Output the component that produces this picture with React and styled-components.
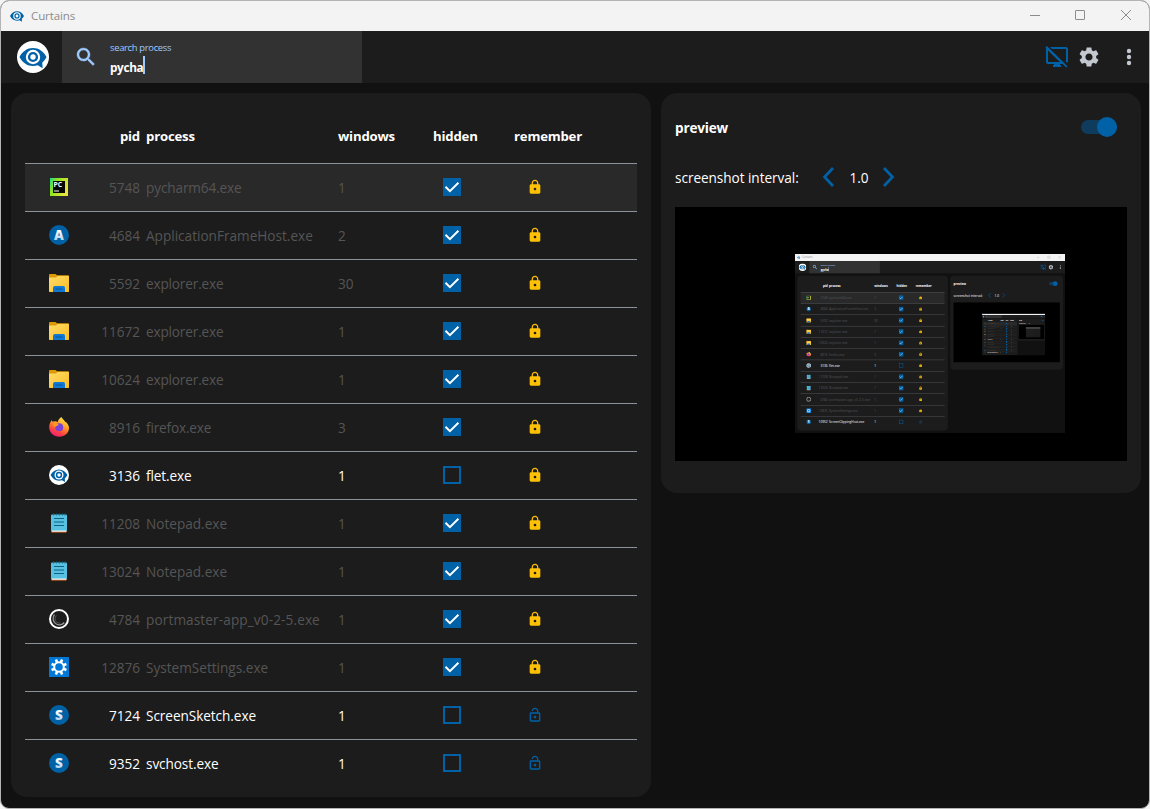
import React from "react";
import styled, { createGlobalStyle, css } from "styled-components";

const Global = createGlobalStyle`
  *, *::before, *::after { box-sizing: border-box; }
  body { margin: 0; background: #f4f4f4; overflow: hidden; }
`;

const BLUE = "#0061a6";
const font = '"Open Sans", "Noto Sans", sans-serif';

const WindowFrame = styled.div`
  display: flex;
  flex-direction: column;
  width: ${(p) => (p.$nested ? 1148 : 1150)}px;
  height: ${(p) => (p.$nested ? 761 : 809)}px;
  overflow: hidden;
  background: #111;
  color: #fff;
  font-family: ${font};
  font-size: 13.6px;
  ${(p) =>
    !p.$nested &&
    css`
      border: 1px solid #b4b4b4;
      border-radius: 9px;
    `}
`;

const TitleBar = styled.header`
  display: flex;
  align-items: center;
  flex: none;
  height: 30px;
  padding-left: 9px;
  background: #f3f3f3;
  color: #8c8c8c;
`;

const TitleText = styled.span`
  flex: 1;
  margin-left: 7px;
  font-size: 11.6px;
  line-height: 16px;
  letter-spacing: -0.15px;
`;

const WindowControls = styled.div`
  display: flex;
  svg { display: block; width: 46px; height: 30px; }
`;

const AppBar = styled.div`
  display: flex;
  align-items: center;
  flex: none;
  height: 52px;
  background: #1c1c1c;
`;

const Brand = styled.div`
  display: flex;
  width: 61px;
  padding-left: 16px;
`;

const SearchField = styled.div`
  display: flex;
  align-items: center;
  width: 300px;
  height: 52px;
  padding-left: 12px;
  background: #323232;
`;

const SearchLabels = styled.div`
  display: flex;
  flex-direction: column;
  gap: 2px;
  margin-left: 12px;
  padding-top: 4px;
`;

const SearchLabel = styled.span`
  height: 14px;
  font-size: 9.4px;
  line-height: 14px;
  font-weight: 500;
  letter-spacing: -0.3px;
  color: #9ecaff;
`;

const SearchValue = styled.span`
  display: flex;
  align-items: center;
  height: 20px;
  font-size: 11.8px;
  line-height: 20px;
  font-weight: 700;
  letter-spacing: -0.35px;
`;

const Caret = styled.i`
  width: 2px;
  height: 18px;
  margin-top: -4px;
  background: #9ecaff;
`;

const Actions = styled.div`
  display: flex;
  align-items: center;
  margin-left: auto;
  padding-right: 8px;
  svg { display: block; }
`;

const MoreButton = styled.div`
  display: flex;
  margin-left: 16px;
`;

const Body = styled.main`
  display: flex;
  align-items: flex-start;
  flex: 1;
  min-height: 0;
  gap: 10px;
  padding: 10px 8px 11px 10px;
`;

const Panel = styled.section`
  background: #1c1c1c;
  border-radius: 16px;
  padding: 14px;
  overflow: hidden;
`;

const TablePanel = styled(Panel)`
  width: 640px;
  height: 100%;
`;

const PreviewPanel = styled(Panel)`
  width: 480px;
  height: 400px;
`;

const columns = css`
  display: grid;
  grid-template-columns: 20px 72px 197px 95px 81px 1fr;
  align-items: center;
  width: 612px;
  padding-left: 24px;
`;

const HeadRow = styled.div`
  ${columns}
  height: 56px;
  font-weight: 700;
  font-size: 13.2px;
  letter-spacing: -0.2px;
`;

const Row = styled.div`
  ${columns}
  height: 48px;
  padding-bottom: 2px;
  border-top: 1px solid #8d9199;
  background: ${(p) => (p.$active ? "#292929" : "transparent")};
  color: ${(p) => (p.$dim ? "#555" : "#fff")};
`;

const Cell = styled.span`
  display: flex;
  white-space: nowrap;
  line-height: 20px;
  padding-top: 2px;
`;

const IconCell = styled(Cell)`
  padding-top: 0;
  svg { display: block; }
`;

const PidCell = styled(Cell)`
  justify-content: flex-end;
  padding-right: 1px;
`;

const NameCell = styled(Cell)`
  padding-left: 5px;
  letter-spacing: ${(p) => p.$ls || 0}px;
`;

const CheckCell = styled(IconCell)`
  padding-left: 10px;
`;

const LockCell = styled(IconCell)`
  padding-left: 12.500px;
`;

const CheckBox = styled.span`
  width: 18px;
  height: 18px;
  border: 2px solid ${BLUE};
  background: ${(p) => (p.$on ? BLUE : "transparent")};
  svg { display: block; margin: -2px; }
`;

const PreviewHead = styled.div`
  display: flex;
  align-items: center;
  justify-content: space-between;
  height: 40px;
  padding-right: 10px;
  font-weight: 700;
  letter-spacing: -0.2px;
`;

const SwitchTrack = styled.div`
  width: 36px;
  height: 14px;
  border-radius: 7px;
  background: #0f3c5d;
`;

const SwitchThumb = styled.div`
  width: 20px;
  height: 20px;
  margin: -3px 0 0 16px;
  border-radius: 50%;
  background: ${BLUE};
`;

const IntervalRow = styled.div`
  display: flex;
  align-items: center;
  height: 60px;
  line-height: 20px;
  svg { display: block; margin-top: -1px; }
`;

const IntervalLabel = styled.span`
  width: 135px;
  padding-top: 2px;
  white-space: nowrap;
  letter-spacing: -0.05px;
`;

const IntervalValue = styled.span`
  width: 22px;
  margin: 0 12px 0 9px;
  padding-top: 2px;
  text-align: center;
`;

const Stage = styled.div`
  display: flex;
  width: 452px;
  height: 254px;
  padding: 47px 0 0 120px;
  background: #000;
`;

const Thumb = styled.div`
  width: 270px;
  height: 179px;
  overflow: hidden;
`;

const Shrink = styled.div`
  width: 1148px;
  height: 761px;
  transform: scale(0.2352);
  transform-origin: 0 0;
`;

const MiniWindow = styled.div`
  display: flex;
  flex-direction: column;
  width: 270px;
  height: 179px;
  background: #1c1c1c;
  border-top: 12px solid #f3f3f3;
`;

const MiniRow = styled.div`
  flex: 1;
  margin: 0 130px 0 10px;
  border-bottom: 3px solid #444;
`;

function EyeLogo({ size, bare }) {
  return (
    <svg width={size} height={size} viewBox="0 0 32 32">
      {!bare && <circle cx="16" cy="16" r="16" fill="#fff" />}
      <g transform={bare ? "translate(-2.9 -2.9) scale(1.18)" : undefined}>
        <path
          d="M2.500 16C5.300 10.400 10.300 7 16 7S26.700 10.400 29.500 16c-1 2.100-2.400 4-4.200 5.500l.3 5.800-4.800-3c-1.500.5-3.100.7-4.800.7C10.300 25 5.300 21.600 2.500 16z"
          fill={BLUE}
        />
        <circle cx="16" cy="16" r="7.200" fill="#fff" />
        <circle cx="16" cy="16" r="5.100" fill={BLUE} />
        <circle cx="16" cy="16" r="2.700" fill="#fff" />
      </g>
    </svg>
  );
}

function PyCharmIcon() {
  return (
    <svg width="20" height="20" viewBox="0 0 20 20">
      <defs>
        <linearGradient id="pc" x1="0" y1="0" x2="1" y2=".5">
          <stop offset="0" stopColor="#21d789" />
          <stop offset=".35" stopColor="#8be621" />
          <stop offset="1" stopColor="#e8e337" />
        </linearGradient>
      </defs>
      <path d="M1 1h18v18H1z" fill="url(#pc)" />
      <path d="M4 4h12v12H4z" fill="#050805" />
      <text x="4.600" y="9.900" fontSize="6.800" fontWeight="700" fill="#fff" fontFamily="Open Sans, sans-serif">PC</text>
      <path d="M5 13.500h5v1H5z" fill="#fff" />
    </svg>
  );
}

function LetterIcon({ letter }) {
  return (
    <svg width="20" height="20" viewBox="0 0 20 20">
      <defs>
        <linearGradient id="letter" x1="0" y1="0" x2="0" y2="1">
          <stop offset=".3" stopColor="#fff" />
          <stop offset="1" stopColor="#8fbbe0" />
        </linearGradient>
      </defs>
      <circle cx="10" cy="10" r="10" fill={BLUE} />
      <text x="10" y="15" fontSize="13.500" fontWeight="800" fill="url(#letter)" textAnchor="middle" fontFamily="Open Sans, sans-serif">{letter}</text>
    </svg>
  );
}

function FolderIcon() {
  return (
    <svg width="20" height="20" viewBox="0 0 20 20">
      <defs>
        <linearGradient id="folder" x1="0" y1="0" x2="1" y2="1">
          <stop offset="0" stopColor="#ffdc6b" />
          <stop offset="1" stopColor="#fdbd20" />
        </linearGradient>
      </defs>
      <path d="M0 2q0-1 1-1h5.500l1.500 1.300h11q1 0 1 1V8H0z" fill="#dd9a06" />
      <path d="M0 5q0-.6.8-.6H7L8.600 3H19.400q.6 0 .6.800V18.300q0 .7-.7.700H.7Q0 19 0 18.300z" fill="url(#folder)" />
      <path d="M4 19v-4q0-2 2-2h8q2 0 2 2v4z" fill="#0f78d0" />
      <path d="M6.500 15.500h7v1h-7z" fill="#0a549e" />
    </svg>
  );
}

function FirefoxIcon() {
  return (
    <svg width="20" height="20" viewBox="0 0 20 20">
      <defs>
        <linearGradient id="fox" x1=".8" y1="0" x2=".3" y2="1">
          <stop offset="0" stopColor="#fff04a" />
          <stop offset=".4" stopColor="#ffa129" />
          <stop offset=".7" stopColor="#ff5038" />
          <stop offset="1" stopColor="#f5167e" />
        </linearGradient>
      </defs>
      <path d="M12.500 0c.6 1.800 3 3 3.800 5 1 .2 1.600 1 1.900 1.400C19.500 8 20 9.500 20 11c0 5-4.400 8.700-9.800 8.700S.2 15.600.2 10.200C.2 7 1.500 4.500 3 3c0 1 .2 1.400.6 1.800C4.500 4.300 5 4 5.200 4.600c1.300-.5 2.500-.2 3.500.7C9 3 10.500 1 12.500 0z" fill="url(#fox)" />
      <circle cx="10.200" cy="10.300" r="4" fill="#7a42d8" />
      <path d="M4 7c2-1.200 4.200-.8 5.700.7-1 1.500-3 .8-3.500 2.500C5 10 4 8.500 4 7z" fill="#ff9a20" />
    </svg>
  );
}

function NotepadIcon() {
  return (
    <svg width="20" height="20" viewBox="0 0 20 20">
      <path d="M2.500 17h15v2.800h-15z" fill="#a6541c" />
      <path d="M2.500 16h15v2.800h-15z" fill="#f2f2f2" />
      <path d="M2 2.500q0-1 1-1h14q1 0 1 1V17.600H2z" fill="#58c1e2" />
      <path d="M4.500.5v2M7.500.5v2M10.500.5v2M13.500.5v2M16 .5v2" stroke="#117393" />
      <path d="M5 5.500h10M5 9h10M5 12.500h10" stroke="#0d6280" />
    </svg>
  );
}

function PortmasterIcon() {
  return (
    <svg width="20" height="20" viewBox="0 0 20 20" fill="none">
      <circle cx="10" cy="10" r="9" stroke="#fff" strokeWidth="2" />
      <path d="M5.500 5.500a6.300 6.300 0 0 0 9.800 8" stroke="#999" strokeWidth="1.200" />
      <path d="M7.300 6.500a4.400 4.400 0 0 0 4 7.500" stroke="#555" />
    </svg>
  );
}

const gearPath =
  "M19.140 12.940c.04-.3.06-.61.06-.94 0-.32-.02-.64-.07-.94l2.030-1.580c.18-.14.23-.41.12-.61l-1.920-3.320c-.12-.22-.37-.29-.59-.22l-2.390.96c-.5-.38-1.030-.7-1.620-.94l-.36-2.540c-.04-.24-.24-.41-.48-.41h-3.840c-.24 0-.43.17-.47.41l-.36 2.540c-.59.24-1.130.57-1.620.94l-2.390-.96c-.22-.08-.47 0-.59.22L2.740 8.870c-.12.21-.08.47.12.61l2.030 1.580c-.05.3-.09.63-.09.94s.02.64.07.94l-2.030 1.580c-.18.14-.23.41-.12.61l1.920 3.320c.12.22.37.29.59.22l2.390-.96c.5.38 1.030.7 1.620.94l.36 2.540c.05.24.24.41.48.41h3.840c.24 0 .44-.17.47-.41l.36-2.540c.59-.24 1.130-.56 1.620-.94l2.390.96c.22.08.47 0 .59-.22l1.920-3.320c.12-.22.07-.47-.12-.61l-2.010-1.580zM12 15.600c-1.980 0-3.600-1.620-3.600-3.600s1.620-3.600 3.600-3.600 3.600 1.620 3.600 3.600-1.620 3.600-3.600 3.600z";

function SettingsTile() {
  return (
    <svg width="20" height="20" viewBox="0 0 20 20">
      <path d="M0 0h20v20H0z" fill="#0078d7" />
      <g fill="none" stroke="#fff">
        <circle cx="10" cy="10" r="4.800" strokeWidth="2" />
        {[22.5, 67.5, 112.5, 157.5, 202.5, 247.5, 292.5, 337.5].map((a) => (
          <path key={a} d="M10 2v3" strokeWidth="2.600" transform={`rotate(${a} 10 10)`} />
        ))}
      </g>
    </svg>
  );
}

function LockIcon({ open }) {
  return (
    <svg width="16" height="16" viewBox="0 0 24 24" fill={open ? BLUE : "#ffc107"}>
      {open ? (
        <path d="M12 17c1.100 0 2-.9 2-2s-.9-2-2-2-2 .9-2 2 .9 2 2 2zm6-9h-1V6c0-2.760-2.240-5-5-5S7 3.240 7 6h1.900c0-1.710 1.390-3.100 3.100-3.100s3.100 1.390 3.100 3.100v2H6c-1.100 0-2 .9-2 2v10c0 1.100.9 2 2 2h12c1.100 0 2-.9 2-2V10c0-1.100-.9-2-2-2zm0 12H6V10h12v10z" />
      ) : (
        <path d="M18 8h-1V6c0-2.760-2.240-5-5-5S7 3.240 7 6v2H6c-1.100 0-2 .9-2 2v10c0 1.100.9 2 2 2h12c1.100 0 2-.9 2-2V10c0-1.100-.9-2-2-2zm-6 9c-1.100 0-2-.9-2-2s.9-2 2-2 2 .9 2 2-.9 2-2 2zm3.100-9H8.900V6c0-1.710 1.390-3.100 3.100-3.100s3.100 1.390 3.100 3.100v2z" />
      )}
    </svg>
  );
}

const icons = {
  pycharm: <PyCharmIcon />,
  a: <LetterIcon letter="A" />,
  s: <LetterIcon letter="S" />,
  folder: <FolderIcon />,
  firefox: <FirefoxIcon />,
  eye: <EyeLogo size={20} />,
  notepad: <NotepadIcon />,
  portmaster: <PortmasterIcon />,
  settings: <SettingsTile />,
};

const processes = [
  { icon: "pycharm", pid: 5748, name: "pycharm64.exe", windows: 1, hidden: true, locked: true, ls: -0.12 },
  { icon: "a", pid: 4684, name: "ApplicationFrameHost.exe", windows: 2, hidden: true, locked: true },
  { icon: "folder", pid: 5592, name: "explorer.exe", windows: 30, hidden: true, locked: true, ls: -0.16 },
  { icon: "folder", pid: 11672, name: "explorer.exe", windows: 1, hidden: true, locked: true, ls: -0.16 },
  { icon: "folder", pid: 10624, name: "explorer.exe", windows: 1, hidden: true, locked: true, ls: -0.16 },
  { icon: "firefox", pid: 8916, name: "firefox.exe", windows: 3, hidden: true, locked: true, ls: -0.16 },
  { icon: "eye", pid: 3136, name: "flet.exe", windows: 1, hidden: false, locked: true, ls: -0.1 },
  { icon: "notepad", pid: 11208, name: "Notepad.exe", windows: 1, hidden: true, locked: true },
  { icon: "notepad", pid: 13024, name: "Notepad.exe", windows: 1, hidden: true, locked: true },
  { icon: "portmaster", pid: 4784, name: "portmaster-app_v0-2-5.exe", windows: 1, hidden: true, locked: true, ls: 0.12 },
  { icon: "settings", pid: 12876, name: "SystemSettings.exe", windows: 1, hidden: true, locked: true },
  { icon: "s", pid: 7124, name: "ScreenSketch.exe", windows: 1, hidden: false, locked: false, ls: -0.06 },
  { icon: "s", pid: 9352, name: "svchost.exe", windows: 1, hidden: false, locked: false, ls: -0.1 },
];

const capturedProcesses = [
  ...processes.slice(0, 11),
  { icon: "s", pid: 10952, name: "ScreenClippingHost.exe", windows: 1, hidden: false, locked: false },
];

function ProcessRow({ item, active }) {
  return (
    <Row $active={active} $dim={item.hidden}>
      <IconCell>{icons[item.icon]}</IconCell>
      <PidCell>{item.pid}</PidCell>
      <NameCell $ls={item.ls}>{item.name}</NameCell>
      <Cell>{item.windows}</Cell>
      <CheckCell>
        <CheckBox $on={item.hidden}>
          {item.hidden && (
            <svg width="18" height="18" viewBox="0 0 18 18" fill="none" stroke="#fff" strokeWidth="2">
              <path d="M2.500 8.800l4.400 4.400 8.500-8.500" />
            </svg>
          )}
        </CheckBox>
      </CheckCell>
      <LockCell><LockIcon open={!item.locked} /></LockCell>
    </Row>
  );
}

function CurtainsWindow({ depth = 0 }) {
  const nested = depth > 0;
  const rows = nested ? capturedProcesses : processes;
  return (
    <WindowFrame $nested={nested}>
      <TitleBar>
        <EyeLogo size={14} bare />
        <TitleText>Curtains</TitleText>
        <WindowControls>
          <svg viewBox="0 0 46 30" stroke="#8c8c8c"><path d="M19 14.500h10" /></svg>
          <svg viewBox="0 0 46 30" stroke="#8c8c8c" fill="none"><rect x="18.500" y="9.500" width="9" height="9" rx=".5" /></svg>
          <svg viewBox="0 0 46 30" stroke="#8c8c8c"><path d="M18 9l10 10M28 9L18 19" /></svg>
        </WindowControls>
      </TitleBar>
      <AppBar>
        <Brand><EyeLogo size={32} /></Brand>
        <SearchField>
          <svg width="24" height="24" viewBox="0 0 24 24" fill="#9ecaff" stroke="#9ecaff" strokeWidth=".4">
            <path d="M15.500 14h-.79l-.28-.27C15.410 12.590 16 11.110 16 9.500 16 5.910 13.090 3 9.500 3S3 5.910 3 9.500 5.910 16 9.500 16c1.610 0 3.090-.59 4.230-1.570l.27.28v.79l5 4.990L20.490 19l-4.990-5zm-6 0C7.010 14 5 11.990 5 9.500S7.010 5 9.500 5 14 7.010 14 9.500 11.990 14 9.500 14z" />
          </svg>
          <SearchLabels>
            <SearchLabel>search process</SearchLabel>
            <SearchValue>pycha<Caret /></SearchValue>
          </SearchLabels>
        </SearchField>
        <Actions>
          <svg width="40" height="24" viewBox="-8 -1 40 24" fill={BLUE}>
            <path d="M0.600 1.300L1.900 0 22.500 20.200 21.200 21.500 17.700 18H15v1h1v2H8v-2h1v-1H3c-1.100 0-2-.9-2-2V3.100zM3 4.500V16h11.800zM5 1H21c1.100 0 2 .9 2 2v12c0 .8-.4 1.400-1 1.700L20.300 15H21V3H7z" />
          </svg>
          <svg width="24" height="24" viewBox="0 0 24 24" fill="#c3c7cf"><path d={gearPath} /></svg>
          <MoreButton>
            <svg width="24" height="24" viewBox="0 0 24 24" fill="#c3c7cf">
              <circle cx="12" cy="6" r="2.200" /><circle cx="12" cy="12" r="2.200" /><circle cx="12" cy="18" r="2.200" />
            </svg>
          </MoreButton>
        </Actions>
      </AppBar>
      <Body>
        <TablePanel>
          <HeadRow>
            <Cell />
            <PidCell>pid</PidCell>
            <NameCell $ls={-0.2}>process</NameCell>
            <Cell>windows</Cell>
            <Cell>hidden</Cell>
            <Cell>remember</Cell>
          </HeadRow>
          {rows.map((item, i) => (
            <ProcessRow key={item.pid} item={item} active={i === 0} />
          ))}
        </TablePanel>
        <PreviewPanel>
          <PreviewHead>
            <span>preview</span>
            <SwitchTrack><SwitchThumb /></SwitchTrack>
          </PreviewHead>
          <IntervalRow>
            <IntervalLabel>screenshot interval:</IntervalLabel>
            <svg width="29" height="24" viewBox="0 0 29 24" fill="none" stroke={BLUE} strokeWidth="2.700"><path d="M23 3l-8.500 9 8.500 9" /></svg>
            <IntervalValue>1.0</IntervalValue>
            <svg width="24" height="24" viewBox="0 0 24 24" fill="none" stroke={BLUE} strokeWidth="2.700"><path d="M2 3l8.500 9L2 21" /></svg>
          </IntervalRow>
          <Stage>
            <Thumb>
              {depth < 2 ? (
                <Shrink><CurtainsWindow depth={depth + 1} /></Shrink>
              ) : (
                <MiniWindow>
                  {[0, 1, 2, 3].map((n) => <MiniRow key={n} />)}
                </MiniWindow>
              )}
            </Thumb>
          </Stage>
        </PreviewPanel>
      </Body>
    </WindowFrame>
  );
}

export default function App() {
  return (
    <>
      <Global />
      <CurtainsWindow />
    </>
  );
}
